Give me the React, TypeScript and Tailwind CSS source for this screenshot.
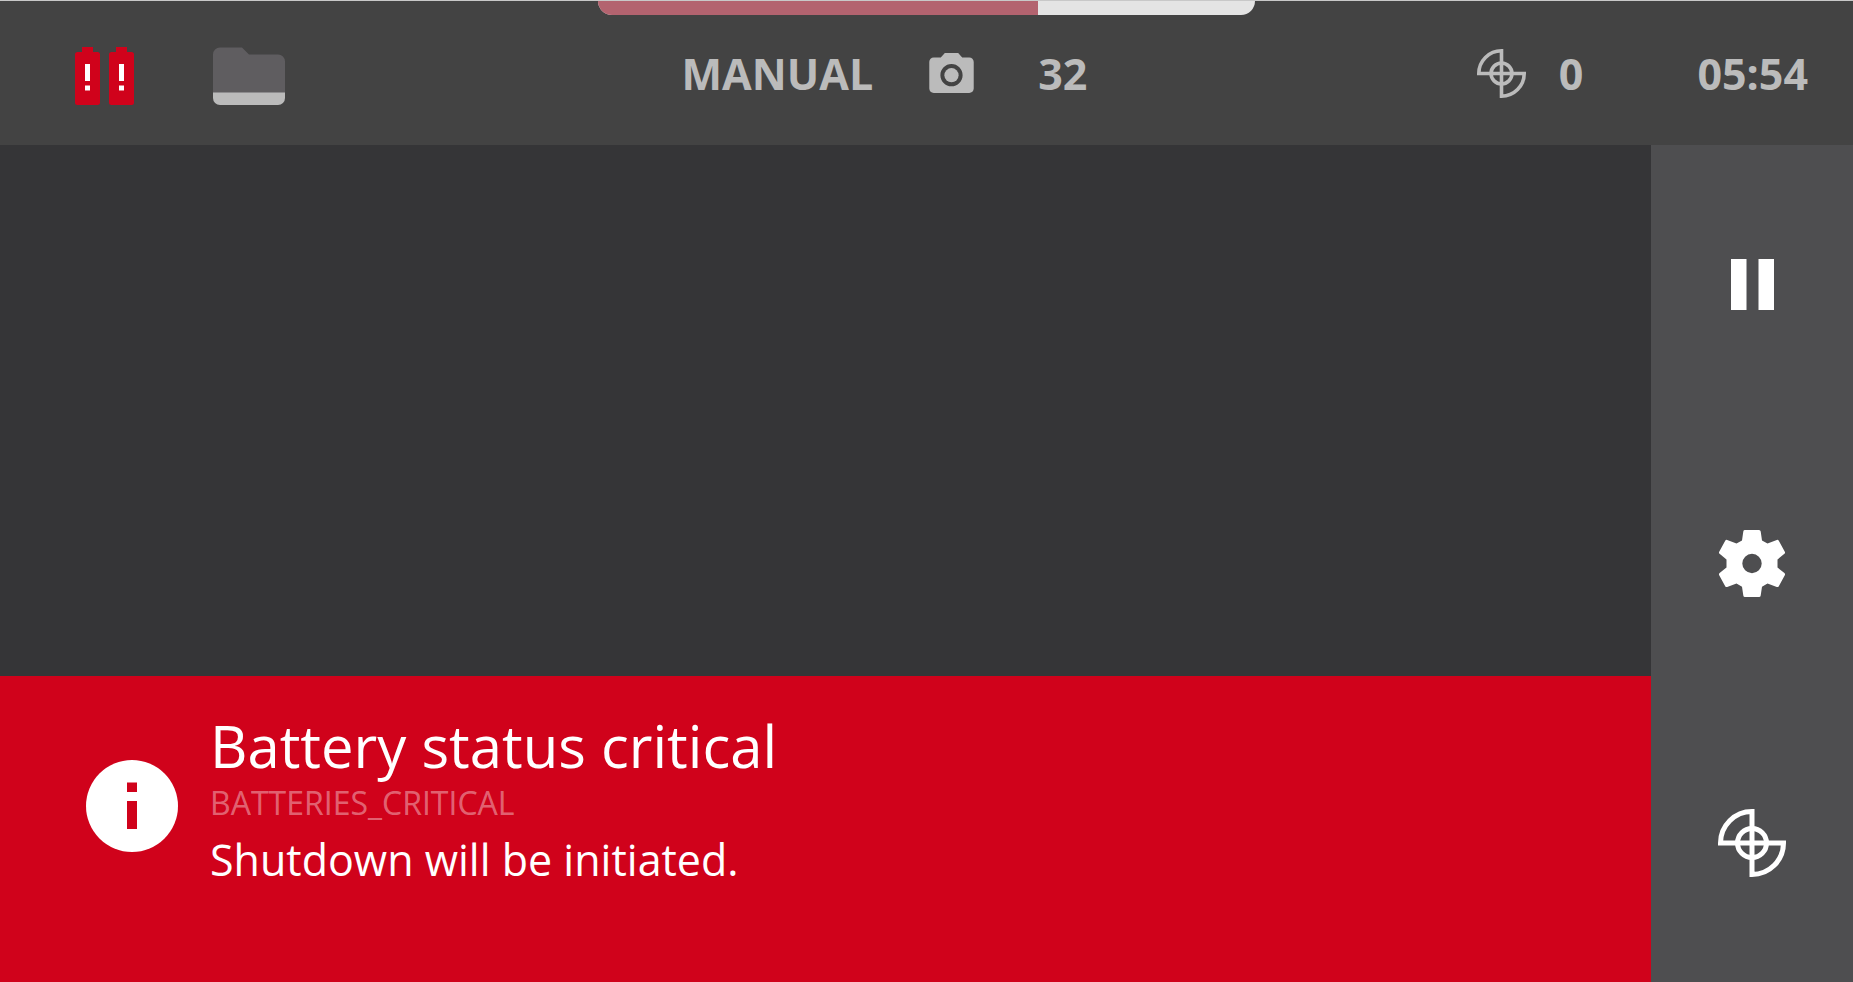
type IconProps = { className?: string };

const BatteryAlertIcon = ({ className }: IconProps) => (
	<svg viewBox="0 0 25 58" className={className} aria-hidden="true">
		<path
			fill="#d0021b"
			d="M7 0h11v5h4.500a2.500 2.500 0 0 1 2.500 2.500v48a2.500 2.500 0 0 1-2.500 2.500H2.500a2.500 2.500 0 0 1-2.500-2.500V7.500a2.500 2.500 0 0 1 2.500-2.500H7z"
		/>
		<path fill="#fff" d="M10 17h5v17h-5zM10 38.500h5v5h-5z" />
	</svg>
);

const FolderIcon = ({ className }: IconProps) => (
	<svg viewBox="0 0 72 58" className={className} aria-hidden="true">
		<path
			fill="#5f5d60"
			d="M7 .5h22l7 7h29a7 7 0 0 1 7 7V46H0V7.500a7 7 0 0 1 7-7z"
		/>
		<path fill="#bbb" d="M0 45.500h72V51a7 7 0 0 1-7 7H7a7 7 0 0 1-7-7z" />
	</svg>
);

const CameraIcon = ({ className }: IconProps) => (
	<svg viewBox="2 2 20 18" className={className} aria-hidden="true">
		<circle cx="12" cy="12" r="3.200" fill="currentColor" />
		<path
			fill="currentColor"
			d="M9 2 7.170 4H4c-1.100 0-2 .9-2 2v12c0 1.100.9 2 2 2h16c1.100 0 2-.9 2-2V6c0-1.100-.9-2-2-2h-3.170L15 2H9zm3 15c-2.760 0-5-2.240-5-5s2.240-5 5-5 5 2.240 5 5-2.240 5-5 5z"
		/>
	</svg>
);

const TargetIcon = ({ className }: IconProps) => (
	<svg
		viewBox="0 0 68 68"
		className={className}
		fill="none"
		stroke="currentColor"
		strokeWidth="5"
		aria-hidden="true"
	>
		<path d="M34 34V2.500A31.500 31.500 0 0 0 2.500 34H65.500A31.500 31.500 0 0 1 34 65.500V34" />
		<circle cx="34" cy="34" r="14.500" />
	</svg>
);

const PauseIcon = ({ className }: IconProps) => (
	<svg viewBox="0 0 43 51" className={className} aria-hidden="true">
		<path fill="currentColor" d="M0 0h15.500v51H0zM27.500 0H43v51H27.500z" />
	</svg>
);

const GearIcon = ({ className }: IconProps) => (
	<svg viewBox="0 0 66 67" className={className} aria-hidden="true">
		<path
			fill="currentColor"
			fillRule="evenodd"
			d="M26 0h14q1.500 0 1.700 1.500L43 10.500l5.500 3 9.300-3.600q1.300-.4 2 .8l6 11q.7 1.200-.4 2.100L58.500 29.500v8l6.900 5.600q1.100.9.400 2.100l-6 11q-.7 1.200-2 .8L48.500 53.500l-5.500 3.200-1.300 8.800Q41.500 67 40 67H26q-1.500 0-1.700-1.500L23 56.700l-5.500-3.200L8.200 57q-1.300.4-2-.8l-6-11q-.7-1.200.4-2.100L7.500 37.500v-8L.6 23.800q-1.100-.9-.4-2.100l6-11q.7-1.200 2-.8l9.300 3.600 5.500-3 1.300-9Q24.500 0 26 0zM33 23.800a9.700 9.700 0 1 0 0 19.400 9.700 9.700 0 0 0 0-19.400z"
		/>
	</svg>
);

const InfoIcon = ({ className }: IconProps) => (
	<svg viewBox="0 0 92 92" className={className} aria-hidden="true">
		<circle cx="46" cy="46" r="46" fill="#fff" />
		<path fill="#d0021b" d="M41 22.500h10v9.500H41zM41 41h10v28H41z" />
	</svg>
);

const StatusBar = () => (
	<header className="relative grid h-36 shrink-0 grid-cols-[1fr_auto_1fr] items-center bg-[#434343] text-[43px] leading-none font-bold text-[#bbb]">
		<div className="absolute inset-x-0 top-0 mx-auto flex h-3.5 w-[657px] overflow-hidden rounded-b-[14px] bg-[#e4e4e4]">
			<div className="w-[67%] bg-[#b3636f]" />
		</div>

		<div className="flex items-center gap-[79px] pt-1.5 pl-[75px]">
			<div className="flex gap-[9px]">
				<BatteryAlertIcon className="h-[58px] w-[25px]" />
				<BatteryAlertIcon className="h-[58px] w-[25px]" />
			</div>
			<FolderIcon className="h-[58px] w-[72px]" />
		</div>

		<div className="flex items-center pr-21">
			<span>MANUAL</span>
			<CameraIcon className="ml-14 h-10 w-[45px]" />
			<span className="ml-16">32</span>
		</div>

		<div className="flex items-center justify-end pr-[45px]">
			<TargetIcon className="size-[49px]" />
			<span className="ml-[33px]">0</span>
			<time className="ml-[114px]">05:54</time>
		</div>
	</header>
);

const CriticalAlert = () => (
	<section
		role="alert"
		className="flex h-[306px] gap-8 bg-[#d0021b] pl-[86px] text-white"
	>
		<InfoIcon className="mt-[84px] size-[92px] shrink-0" />
		<div className="pt-[38px]">
			<h1 className="text-[58px] leading-[64px]">Battery status critical</h1>
			<p className="text-[32px] leading-[50px] text-white/40">
				BATTERIES_CRITICAL
			</p>
			<p className="text-[43px] leading-[64px]">Shutdown will be initiated.</p>
		</div>
	</section>
);

const Sidebar = () => (
	<nav className="grid w-[202px] shrink-0 grid-rows-3 bg-[#4e4e50] text-white">
		<button type="button" aria-label="Pause" className="grid place-items-center">
			<PauseIcon className="h-[51px] w-[43px]" />
		</button>
		<button
			type="button"
			aria-label="Settings"
			className="grid place-items-center"
		>
			<GearIcon className="h-[67px] w-[66px]" />
		</button>
		<button
			type="button"
			aria-label="Place target"
			className="grid place-items-center"
		>
			<TargetIcon className="size-[68px]" />
		</button>
	</nav>
);

export default function App() {
	return (
		<div className="flex min-h-screen flex-col border-t border-[#c8c8c8] bg-[#353537] font-['Open_Sans','Noto_Sans',sans-serif]">
			<StatusBar />
			<div className="flex grow">
				<main className="flex grow flex-col justify-end">
					<CriticalAlert />
				</main>
				<Sidebar />
			</div>
		</div>
	);
}
